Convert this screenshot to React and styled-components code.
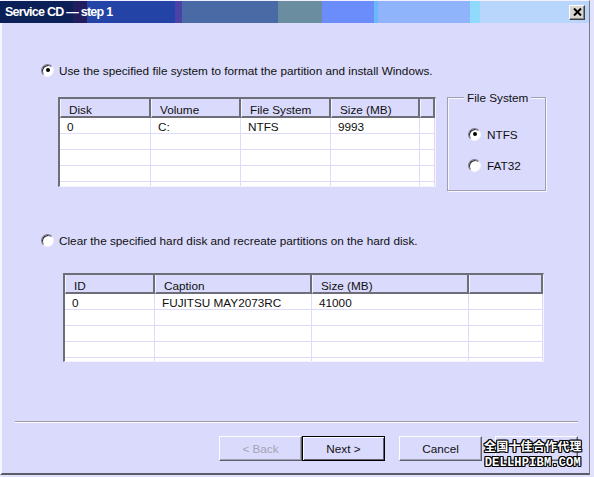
import React from "react";
import styled, { createGlobalStyle } from "styled-components";

const Global = createGlobalStyle`
  html, body { margin: 0; padding: 0; background: #e2e2fc; }
  body { width: 594px; height: 477px; overflow: hidden; }
`;

const LAV = "#dadafc";
const FONT = `"Liberation Sans", Arial, sans-serif`;

const Window = styled.div`
  position: relative;
  box-sizing: border-box;
  width: 590px;
  height: 475px;
  background: ${LAV};
  border-left: 2px solid #f6f6ff;
  border-right: 1px solid #7a7a88;
  border-bottom: 2px solid #5c5c66;
  border-top: 1px solid #f0f0ff;
  display: flex;
  flex-direction: column;
  font-family: ${FONT};
  font-size: 11.75px;
  color: #101010;
`;

const TitleBar = styled.div`
  height: 22px;
  margin-left: -2px;
  display: flex;
  align-items: center;
  justify-content: space-between;
  padding: 0 4px 0 5px;
  background: linear-gradient(
    90deg,
    #0c2058 0px, #0c2058 73px,
    #221d5c 73px, #221d5c 87px,
    #2443a6 87px, #2443a6 175px,
    #4a42a4 175px, #4a42a4 182px,
    #4a6aa6 182px, #4a6aa6 278px,
    #6a8ea0 278px, #6a8ea0 322px,
    #6b8cfb 322px, #6b8cfb 374px,
    #6cb8fc 374px, #6cb8fc 378px,
    #90b4fb 378px, #90b4fb 470px,
    #90dafc 470px, #90dafc 480px,
    #b8d6fc 480px
  );
`;

const Title = styled.span`
  color: #fff;
  font-family: ${FONT};
  font-weight: bold;
  font-size: 12.5px;
  letter-spacing: -0.75px;
`;

const CloseButton = styled.button`
  box-sizing: border-box;
  width: 16px;
  height: 15px;
  padding: 0;
  background: #d8d6d0;
  border: 1px solid;
  border-color: #ffffff #404040 #404040 #ffffff;
  box-shadow: inset -1px -1px 0 #888;
  display: flex;
  align-items: center;
  justify-content: center;
`;

const Content = styled.div`
  flex: 1;
  display: flex;
  flex-direction: column;
  padding: 0 0 0 39px;
`;

const RadioRow = styled.label`
  display: flex;
  align-items: center;
  gap: 5px;
  height: 14px;
  margin-top: ${(p) => p.$top}px;
  white-space: nowrap;
`;

const RadioCircle = styled.span`
  box-sizing: border-box;
  width: 13px;
  height: 13px;
  border-radius: 50%;
  background: #fff;
  border: 1px solid;
  border-color: #7c7c8c #f4f4ff #f4f4ff #7c7c8c;
  box-shadow: inset 1px 1px 0 #2c2c34;
  display: flex;
  align-items: center;
  justify-content: center;
  flex-shrink: 0;
  &::after {
    content: "";
    width: 4px;
    height: 4px;
    border-radius: 50%;
    background: #000;
    display: ${(p) => (p.$checked ? "block" : "none")};
  }
`;

const Radio = ({ checked, children, top }) => (
  <RadioRow $top={top}>
    <RadioCircle $checked={checked} />
    <span>{children}</span>
  </RadioRow>
);

const SectionRow = styled.div`
  display: flex;
  align-items: flex-start;
  gap: 11px;
  margin-top: ${(p) => p.$top}px;
  margin-left: ${(p) => p.$left}px;
`;

const TableFrame = styled.div`
  box-sizing: border-box;
  width: ${(p) => p.$w}px;
  height: ${(p) => p.$h}px;
  background: #fff;
  border-top: 2px solid #6e6e78;
  border-left: 2px solid #6e6e78;
  border-right: 1px solid #f4f4ff;
  border-bottom: 1px solid #f4f4ff;
  overflow: hidden;
  display: grid;
  grid-template-columns: ${(p) => p.$cols};
  grid-template-rows: 19px;
  grid-auto-rows: 16px;
`;

const HeadCell = styled.div`
  box-sizing: border-box;
  background: ${LAV};
  border-right: 2px solid #6e6e78;
  border-bottom: 2px solid #6e6e78;
  border-left: 1px solid #f4f4ff;
  padding: 4px 0 0 8px;
  line-height: 13px;
  white-space: nowrap;
  overflow: hidden;
  &:last-of-type { border-right: none; }
`;

const Cell = styled.div`
  box-sizing: border-box;
  border-right: 1px solid #dcdcf8;
  border-bottom: 1px solid #dcdcf8;
  padding: 3px 0 0 7px;
  line-height: 12px;
  white-space: nowrap;
  overflow: hidden;
`;

const DataTable = ({ w, h, cols, headers, rows }) => {
  const n = headers.length;
  const allRows = [...rows];
  while (allRows.length < 5) allRows.push(Array(n).fill(""));
  return (
    <TableFrame $w={w} $h={h} $cols={cols}>
      {headers.map((hd, i) => (
        <HeadCell key={"h" + i}>{hd}</HeadCell>
      ))}
      {allRows.map((r, ri) =>
        r.map((c, ci) => <Cell key={ri + "-" + ci}>{c}</Cell>)
      )}
    </TableFrame>
  );
};

const GroupBox = styled.div`
  position: relative;
  box-sizing: border-box;
  width: 99px;
  height: 94px;
  padding: 29px 0 0 20px;
  border: 1px solid #a0a0b0;
  box-shadow: 1px 1px 0 #f6f6ff, inset 1px 1px 0 #f6f6ff;
  display: flex;
  flex-direction: column;
  gap: 17px;
`;

const GroupLegend = styled.span`
  position: absolute;
  top: -7px;
  left: 16px;
  padding: 0 3px;
  background: ${LAV};
  line-height: 14px;
  white-space: nowrap;
`;

const GroupRadio = styled.label`
  display: flex;
  align-items: center;
  gap: 6px;
  height: 14px;
`;

const Spacer = styled.div`
  flex: 1;
`;

const Separator = styled.div`
  margin-left: -26px;
  width: 563px;
  height: 1px;
  background: #9c9cac;
  border-bottom: 1px solid #fbfbff;
`;

const ButtonRow = styled.div`
  display: flex;
  justify-content: flex-end;
  padding-right: 11px;
  margin-top: 13px;
  margin-bottom: 12px;
`;

const Button = styled.button`
  box-sizing: border-box;
  width: 83px;
  height: 25px;
  margin-left: ${(p) => p.$gap || 0}px;
  background: ${LAV};
  font-family: ${FONT};
  font-size: 11.75px;
  color: ${(p) => (p.disabled ? "#a4a4b4" : "#101010")};
  border: 1px solid;
  border-color: ${(p) =>
    p.$default ? "#000 #000 #000 #000" : "#fdfdff #606070 #606070 #fdfdff"};
  box-shadow: ${(p) =>
    p.$default
      ? "inset 1px 1px 0 #fdfdff, inset -1px -1px 0 #606070"
      : "inset -1px -1px 0 #a0a0b4"};
  padding: 0;
`;

const Watermark = styled.div`
  position: absolute;
  left: 482px;
  top: 436px;
  display: flex;
  flex-direction: column;
  align-items: center;
  color: #fff;
  font-weight: bold;
  line-height: 17px;
  text-shadow: -1px -1px 0 #000, 1px -1px 0 #000, -1px 1px 0 #000,
    1px 1px 0 #000, 0 1px 0 #000, 0 -1px 0 #000, 1px 0 0 #000, -1px 0 0 #000;
`;

const WmCn = styled.span`
  font-family: "Noto Sans CJK SC", sans-serif;
  font-size: 12px;
  letter-spacing: 0.2px;
`;

const WmEn = styled.span`
  font-family: "Liberation Mono", monospace;
  font-size: 12px;
  letter-spacing: 0.2px;
  margin-top: 1px;
`;

export default function App() {
  return (
    <>
      <Global />
      <Window>
        <TitleBar>
          <Title>Service CD — step 1</Title>
          <CloseButton aria-label="Close">
            <svg width="9" height="8" viewBox="0 0 9 8">
              <path d="M1 0.5 L8 7.5 M8 0.5 L1 7.5" stroke="#000" strokeWidth="2" />
            </svg>
          </CloseButton>
        </TitleBar>
        <Content>
          <Radio checked top={40}>
            Use the specified file system to format the partition and install Windows.
          </Radio>
          <SectionRow $top={20} $left={17}>
            <DataTable
              w={378}
              h={90}
              cols="91px 90px 90px 89px 1fr"
              headers={["Disk", "Volume", "File System", "Size (MB)", ""]}
              rows={[["0", "C:", "NTFS", "9993", ""]]}
            />
            <GroupBox>
              <GroupLegend>File System</GroupLegend>
              <GroupRadio>
                <RadioCircle $checked />
                <span>NTFS</span>
              </GroupRadio>
              <GroupRadio>
                <RadioCircle />
                <span>FAT32</span>
              </GroupRadio>
            </GroupBox>
          </SectionRow>
          <Radio top={42}>
            Clear the specified hard disk and recreate partitions on the hard disk.
          </Radio>
          <SectionRow $top={26} $left={22}>
            <DataTable
              w={481}
              h={89}
              cols="90px 157px 157px 1fr"
              headers={["ID", "Caption", "Size (MB)", ""]}
              rows={[["0", "FUJITSU MAY2073RC", "41000", ""]]}
            />
          </SectionRow>
          <Spacer />
          <Separator />
          <ButtonRow>
            <Button disabled>&lt; Back</Button>
            <Button $default>Next &gt;</Button>
            <Button $gap={14}>Cancel</Button>
            <Button $gap={13}></Button>
          </ButtonRow>
        </Content>
        <Watermark>
          <WmCn>全国十佳合作代理</WmCn>
          <WmEn>DELLHPIBM.COM</WmEn>
        </Watermark>
      </Window>
    </>
  );
}
